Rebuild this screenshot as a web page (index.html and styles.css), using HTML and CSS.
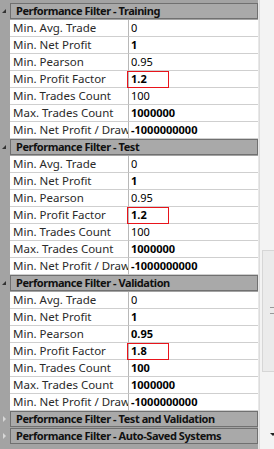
FILE: index.html
```html
<!DOCTYPE html>
<html lang="en">
<head>
<meta charset="utf-8">
<title>Performance Filters</title>
<link rel="stylesheet" href="styles.css">
</head>
<body>
<div class="frame">
  <div class="grid">
    <div class="cat open"><span class="tog"></span><div class="cap">Performance Filter - Training</div></div>
    <div class="row"><span class="g"></span><div class="k">Min. Avg. Trade</div><div class="v">0</div></div>
    <div class="row"><span class="g"></span><div class="k">Min. Net Profit</div><div class="v b">1</div></div>
    <div class="row"><span class="g"></span><div class="k">Min. Pearson</div><div class="v">0.95</div></div>
    <div class="row"><span class="g"></span><div class="k">Min. Profit Factor</div><div class="v b"><span class="mark">1.2</span></div></div>
    <div class="row"><span class="g"></span><div class="k">Min. Trades Count</div><div class="v">100</div></div>
    <div class="row"><span class="g"></span><div class="k">Max. Trades Count</div><div class="v b">1000000</div></div>
    <div class="row"><span class="g"></span><div class="k">Min. Net Profit / Drawdown</div><div class="v b">-1000000000</div></div>

    <div class="cat open"><span class="tog"></span><div class="cap">Performance Filter - Test</div></div>
    <div class="row"><span class="g"></span><div class="k">Min. Avg. Trade</div><div class="v">0</div></div>
    <div class="row"><span class="g"></span><div class="k">Min. Net Profit</div><div class="v b">1</div></div>
    <div class="row"><span class="g"></span><div class="k">Min. Pearson</div><div class="v">0.95</div></div>
    <div class="row"><span class="g"></span><div class="k">Min. Profit Factor</div><div class="v b"><span class="mark">1.2</span></div></div>
    <div class="row"><span class="g"></span><div class="k">Min. Trades Count</div><div class="v">100</div></div>
    <div class="row"><span class="g"></span><div class="k">Max. Trades Count</div><div class="v b">1000000</div></div>
    <div class="row"><span class="g"></span><div class="k">Min. Net Profit / Drawdown</div><div class="v b">-1000000000</div></div>

    <div class="cat open"><span class="tog"></span><div class="cap">Performance Filter - Validation</div></div>
    <div class="row"><span class="g"></span><div class="k">Min. Avg. Trade</div><div class="v">0</div></div>
    <div class="row"><span class="g"></span><div class="k">Min. Net Profit</div><div class="v b">1</div></div>
    <div class="row"><span class="g"></span><div class="k">Min. Pearson</div><div class="v b">0.95</div></div>
    <div class="row"><span class="g"></span><div class="k">Min. Profit Factor</div><div class="v b"><span class="mark">1.8</span></div></div>
    <div class="row"><span class="g"></span><div class="k">Min. Trades Count</div><div class="v b">100</div></div>
    <div class="row"><span class="g"></span><div class="k">Max. Trades Count</div><div class="v b">1000000</div></div>
    <div class="row"><span class="g"></span><div class="k">Min. Net Profit / Drawdown</div><div class="v b">-1000000000</div></div>

    <div class="cat shut"><span class="tog"></span><div class="cap">Performance Filter - Test and Validation</div></div>
    <div class="cat shut"><span class="tog"></span><div class="cap">Performance Filter - Auto-Saved Systems</div></div>
  </div>
  <div class="scroll">
    <div class="thumb"><span class="grip"></span></div>
    <div class="arrow"></div>
  </div>
</div>
</body>
</html>
```

FILE: styles.css
```css
html, body { margin:0; padding:0; background:#fff }
body { font-family:"Noto Sans", "DejaVu Sans", sans-serif; font-size:11px; color:#2a2a2a }
.frame { display:flex; width:274px; height:449px; overflow:hidden; background:#a3a3a3 }
.grid { width:258px; padding-top:3px; background:#a3a3a3; border-right:1px solid #e8e8e8 }
.scroll { position:relative; flex:1; background:#f3f3f3; border-left:1px solid #dcdcdc }

.cat { display:flex; height:17px; position:relative }
.cat .tog { width:10px; position:relative }
.cat .cap { flex:1; margin:0 0 1px 0; border:1px solid #707070; background:#a9a9a9; font-weight:bold; letter-spacing:-0.45px; color:#111; line-height:14px; padding-left:5px; white-space:nowrap; overflow:hidden }
.cat.open .tog::after { content:""; position:absolute; left:2px; top:6px; border-left:4px solid transparent; border-bottom:4px solid #333 }
.cat.shut .tog::after { content:""; position:absolute; left:3px; top:5px; border-top:3px solid transparent; border-bottom:3px solid transparent; border-left:3px solid #d8d8d8 }

.row { display:flex; height:17px }
.row .g { width:10px; flex:none }
.row .k { width:119px; flex:none; background:#fff; border-bottom:1px solid #cfcfcf; border-right:1px solid #b8b8b8; padding-left:3px; box-sizing:border-box; font-size:11.5px; line-height:16px; white-space:nowrap; overflow:hidden }
.row .v { flex:1; background:#fff; border-bottom:1px solid #cfcfcf; padding-left:2px; line-height:16px; color:#000; white-space:nowrap; position:relative }
.row .v.b { font-weight:bold }
.mark { display:inline-block }
.mark::after { content:""; position:absolute; left:-2px; top:0; width:40px; height:15px; border:1px solid #e8141b }

.thumb { position:absolute; left:2px; right:-4px; top:250px; height:120px; background:#ebebeb; border:1px solid #d6d6d6 }
.grip { position:absolute; left:7px; top:56px; width:6px; height:5px; border-top:1px solid #999; border-bottom:1px solid #999 }
.arrow { position:absolute; left:10px; top:433px; border-left:3px solid transparent; border-right:3px solid transparent; border-top:3px solid #222 }
```
